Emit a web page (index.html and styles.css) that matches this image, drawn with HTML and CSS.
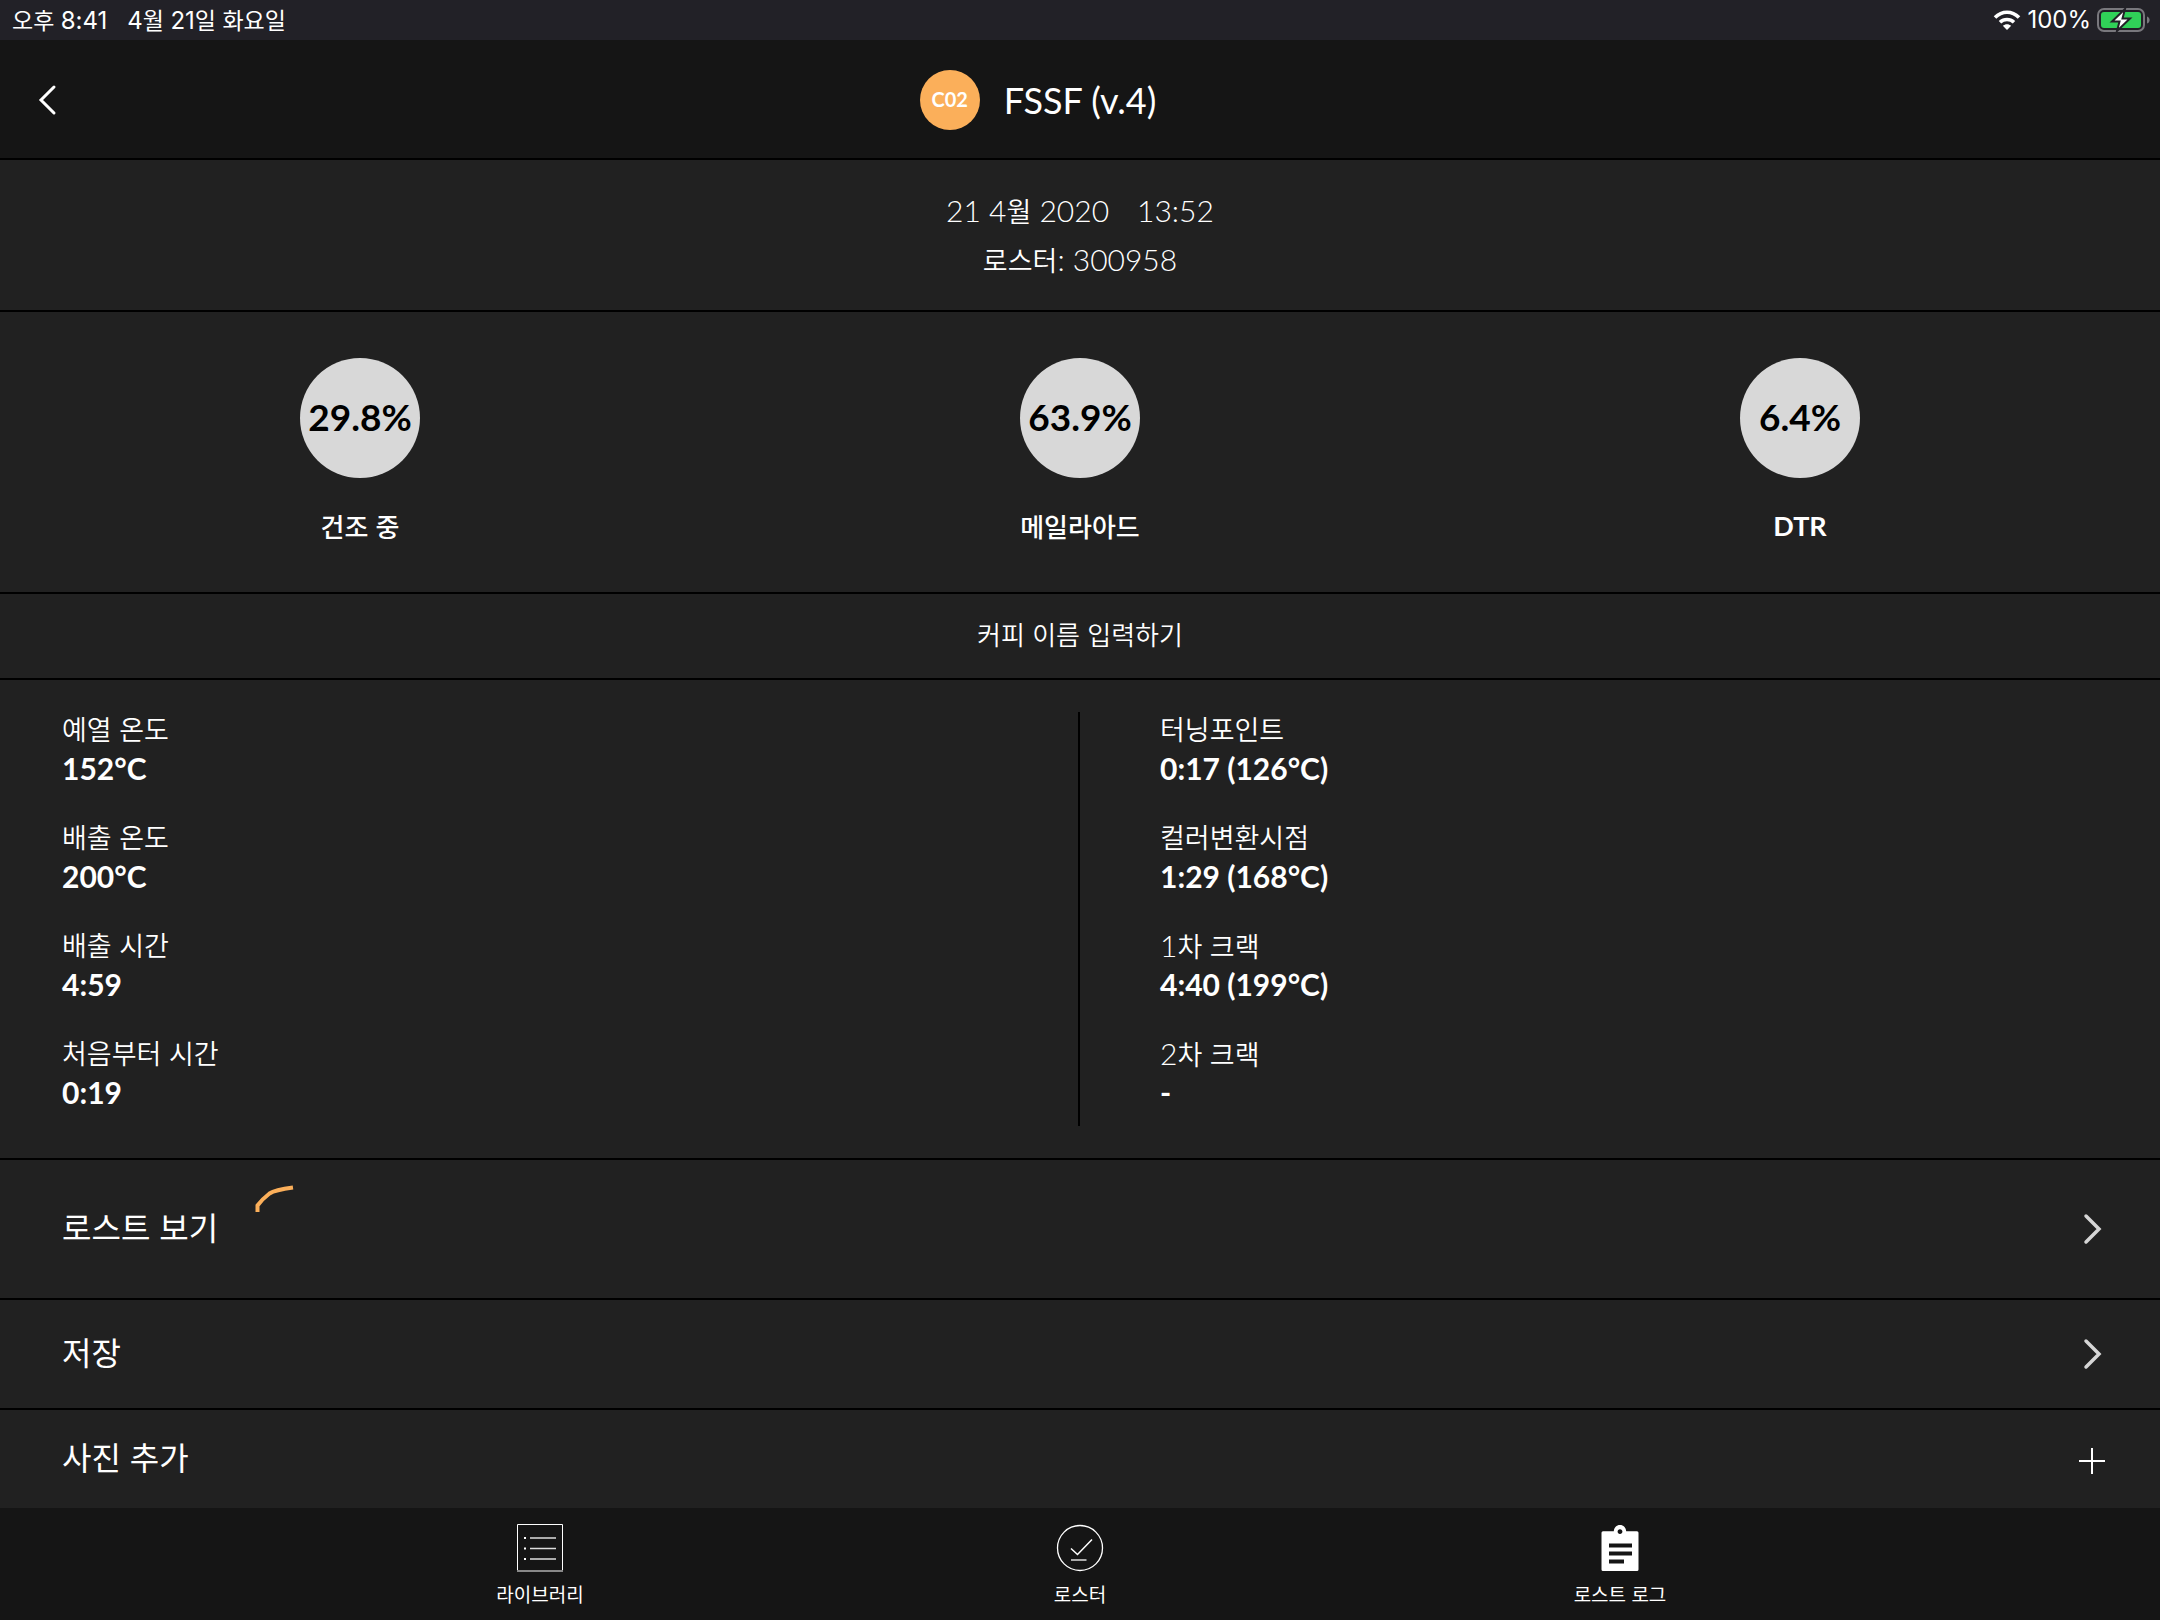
FILE: index.html
```html
<!DOCTYPE html>
<html lang="ko">
<head>
<meta charset="utf-8">
<meta name="viewport" content="width=device-width, initial-scale=1">
<title>FSSF (v.4)</title>
<link rel="stylesheet" href="styles.css">
</head>
<body>
<div class="status">
  <div class="status-left"><span>오후 <span class="status-num">8:41</span></span><span><span class="status-num">4</span>월 <span class="status-num">21</span>일 화요일</span></div>
  <div class="status-right">
    <svg class="wifi" viewBox="0 0 28 20" aria-hidden="true"><path d="M2 7.5C9 .5 19 .5 26 7.5M7 12.3C11 8.600 17 8.600 21 12.300" fill="none" stroke="#fff" stroke-width="3.600"/><path d="M14 20l-4.200-4.200c2.400-2.200 6-2.200 8.400 0z" fill="#fff"/></svg>
    <span class="status-num">100%</span>
    <svg class="battery" viewBox="0 0 54 24" aria-hidden="true"><rect x="1" y="1" width="46" height="22" rx="6" fill="none" stroke="#79787d" stroke-width="2"/><rect x="4" y="4" width="40" height="16" rx="3" fill="#30d158"/><path d="M50 8.500c3.500 1 3.500 6 0 7z" fill="#79787d"/><path d="M28 1L15 13.500h7.500L20 23 33 10.500h-7.500z" fill="#fff" stroke="#222127" stroke-width="2"/></svg>
  </div>
</div>
<header class="header">
  <div class="header-side">
    <button class="back" type="button" aria-label="뒤로"><svg viewBox="0 0 20 32" aria-hidden="true"><path d="M17 3L4 16l13 13" fill="none" stroke="#fff" stroke-width="3" stroke-linecap="round"/></svg></button>
    <span class="badge">C02</span>
  </div>
  <h1 class="title">FSSF (v.4)</h1>
</header>
<main class="content">
  <section class="meta">
    <p class="meta-line"><span>21 4<span class="ko">월</span> 2020</span><span>13:52</span></p>
    <p class="meta-line"><span><span class="ko">로스터</span>: 300958</span></p>
  </section>
  <section class="stats">
    <div class="stat"><span class="stat-value">29.8%</span><span class="stat-label">건조 중</span></div>
    <div class="stat"><span class="stat-value">63.9%</span><span class="stat-label">메일라아드</span></div>
    <div class="stat"><span class="stat-value">6.4%</span><span class="stat-label stat-label-latin">DTR</span></div>
  </section>
  <button class="coffee" type="button">커피 이름 입력하기</button>
  <section class="details">
    <dl class="column">
      <div><dt>예열 온도</dt><dd>152°C</dd></div>
      <div><dt>배출 온도</dt><dd>200°C</dd></div>
      <div><dt>배출 시간</dt><dd>4:59</dd></div>
      <div><dt>처음부터 시간</dt><dd>0:19</dd></div>
    </dl>
    <dl class="column column-right">
      <div><dt>터닝포인트</dt><dd>0:17 (126°C)</dd></div>
      <div><dt>컬러변환시점</dt><dd>1:29 (168°C)</dd></div>
      <div><dt><span class="num">1</span>차 크랙</dt><dd>4:40 (199°C)</dd></div>
      <div><dt><span class="num">2</span>차 크랙</dt><dd>-</dd></div>
    </dl>
  </section>
  <button class="row row-tall" type="button">
    <span class="row-label">로스트 보기</span>
    <svg class="curve" viewBox="0 0 40 30" aria-hidden="true"><path d="M3.500 28v-6.500C6 18 11 13 15.500 9.500 20 6.500 28 5 39 3.500" fill="none" stroke="#fbaf5a" stroke-width="4"/></svg>
    <svg class="row-icon" viewBox="0 0 32 32" aria-hidden="true"><path d="M10 3l13 13-13 13" fill="none" stroke="#d6d6d6" stroke-width="3.500" stroke-linecap="round"/></svg>
  </button>
  <button class="row row-mid" type="button">
    <span class="row-label">저장</span>
    <svg class="row-icon" viewBox="0 0 32 32" aria-hidden="true"><path d="M10 3l13 13-13 13" fill="none" stroke="#d6d6d6" stroke-width="3.500" stroke-linecap="round"/></svg>
  </button>
  <button class="row" type="button">
    <span class="row-label">사진 추가</span>
    <svg class="row-icon" viewBox="0 0 32 32" aria-hidden="true"><path d="M3 18h26M16 5v26" fill="none" stroke="#fff" stroke-width="2"/></svg>
  </button>
</main>
<nav class="tabs">
  <a class="tab" href="#library">
    <svg viewBox="0 0 48 48" aria-hidden="true"><path d="M1.500.5h45v47h-45z" fill="none" stroke="#fff"/><path d="M1 47h46" stroke="#888" stroke-width="2"/><path d="M14 14h26M14 24.500h26M14 35h26" stroke="#ddd" stroke-width="1.500"/><path d="M8 14h2M8 24.500h2M8 35h2" stroke="#fff" stroke-width="2"/></svg>
    <span>라이브러리</span>
  </a>
  <a class="tab" href="#roaster">
    <svg viewBox="0 0 48 48" aria-hidden="true"><circle cx="24" cy="24" r="22.500" fill="none" stroke="#fff" stroke-width="1.300"/><path d="M15 24.500l6.500 6L36 15.500" fill="none" stroke="#fff" stroke-width="1.500"/><path d="M15 36h15.500" stroke="#bbb" stroke-width="1.800"/></svg>
    <span>로스터</span>
  </a>
  <a class="tab" href="#log" aria-current="page">
    <svg viewBox="0 0 48 48" aria-hidden="true"><path fill="#fff" fill-rule="evenodd" d="M7 7.300h10.800C18 3.500 20.500 1 24 1s6 2.500 6.200 6.300H41a1.500 1.500 0 0 1 1.500 1.500V45.500A1.500 1.500 0 0 1 41 47H7a1.500 1.500 0 0 1-1.500-1.500V8.800A1.500 1.500 0 0 1 7 7.300zM24 5.200c-1.500 0-2.400 1-2.400 2.400S22.500 10 24 10s2.400-1 2.400-2.400S25.500 5.200 24 5.200zM13 19.500v4h23v-4zM13 27.500v4h23v-4zM13 35.500v4h15v-4z"/></svg>
    <span>로스트 로그</span>
  </a>
</nav>
</body>
</html>
```
FILE: styles.css
```css
* { box-sizing: border-box; }

body {
  margin: 0;
  min-height: 100vh;
  display: flex;
  flex-direction: column;
  background: #212121;
  color: #fff;
  font-family: Lato, "Noto Sans CJK KR", sans-serif;
}

svg { display: block; flex: none; }
p, h1, dl, dd { margin: 0; }

button {
  margin: 0;
  padding: 0;
  border: 0;
  background: none;
  color: inherit;
  font: inherit;
  text-align: left;
  cursor: pointer;
}

/* Status bar */
.status {
  display: flex;
  justify-content: space-between;
  align-items: center;
  height: 40px;
  padding: 0 9px 0 12px;
  background: #222127;
  font-family: "Noto Sans CJK KR", sans-serif;
  font-size: 23px;
  line-height: 38px;
}
.status-left { display: flex; gap: 20px; }
.status-right { display: flex; align-items: center; gap: 6px; }
.status-num { font-family: Inter, sans-serif; font-size: 24px; }
.wifi { width: 28px; height: 20px; }
.battery { width: 54px; height: 24px; }

/* Header */
.header {
  display: grid;
  grid-template-columns: 1fr auto 1fr;
  align-items: center;
  height: 120px;
  padding-top: 2px;
  border-bottom: 2px solid #000;
  background: #151515;
}
.header-side {
  display: flex;
  align-items: center;
  justify-content: space-between;
  padding: 0 24px 0 37px;
}
.back svg { width: 20px; height: 32px; }
.badge {
  width: 60px;
  height: 60px;
  border-radius: 50%;
  background: #fbaf5a;
  font-size: 20px;
  font-weight: 700;
  line-height: 58px;
  text-align: center;
}
.title { font-size: 36px; font-weight: 400; line-height: 58px; }

/* Sections */
.content { flex: 1; display: flex; flex-direction: column; }
.meta {
  padding: 26px 0;
  border-bottom: 2px solid #000;
  font-size: 30px;
  font-weight: 350;
}
.meta-line {
  display: flex;
  justify-content: center;
  gap: 28px;
  height: 49px;
  line-height: 48px;
}
.ko { font-size: 27px; }

.stats {
  display: grid;
  grid-template-columns: repeat(3, 1fr);
  padding: 46px 0 44px;
  border-bottom: 2px solid #000;
}
.stat {
  display: flex;
  flex-direction: column;
  align-items: center;
  gap: 28px;
}
.stat-value {
  width: 120px;
  height: 120px;
  border-radius: 50%;
  background: #d8d8d8;
  color: #000;
  font-size: 37px;
  font-weight: 700;
  line-height: 118px;
  text-align: center;
}
.stat-label {
  height: 42px;
  font-family: "Noto Sans CJK KR", sans-serif;
  font-size: 26px;
  font-weight: 500;
  line-height: 40px;
}
.stat-label-latin { font-family: Lato, sans-serif; font-size: 27px; font-weight: 700; }

.coffee {
  height: 86px;
  padding-bottom: 6px;
  border-bottom: 2px solid #000;
  font-family: "Noto Sans CJK KR", sans-serif;
  font-size: 26px;
  font-weight: 350;
  text-align: center;
}

.details {
  display: grid;
  grid-template-columns: 1fr 1fr;
  padding: 32px 0;
  border-bottom: 2px solid #000;
}
.column {
  display: flex;
  flex-direction: column;
  gap: 32px;
  padding: 0 62px 14px;
  border-right: 2px solid #000;
}
.column-right { padding-left: 80px; border-right: 0; }
.column dt {
  height: 36px;
  font-family: "Noto Sans CJK KR", sans-serif;
  font-size: 27px;
  font-weight: 350;
  line-height: 34px;
}
.column dd {
  height: 40px;
  font-size: 30px;
  font-weight: 700;
  line-height: 40px;
}
.num { font-family: Lato, sans-serif; font-size: 30px; }

.row {
  display: flex;
  align-items: center;
  height: 98px;
  padding: 0 52px 0 62px;
  font-family: "Noto Sans CJK KR", sans-serif;
  font-size: 32px;
  line-height: 48px;
}
.row-label { padding-bottom: 6px; }
.row-tall { height: 140px; border-bottom: 2px solid #000; }
.row-mid { height: 110px; border-bottom: 2px solid #000; }
.row-icon { width: 32px; height: 32px; margin-left: auto; }
.curve { width: 40px; height: 30px; margin: 24px 0 0 36px; align-self: flex-start; }

/* Tab bar */
.tabs {
  display: grid;
  grid-template-columns: repeat(3, 1fr);
  height: 112px;
  padding: 16px 12.5% 0;
  background: #151515;
}
.tab {
  display: flex;
  flex-direction: column;
  align-items: center;
  gap: 8px;
  color: #fff;
  font-family: "Noto Sans CJK KR", sans-serif;
  font-size: 19px;
  line-height: 28px;
  text-decoration: none;
}
.tab svg { width: 48px; height: 48px; }
```
